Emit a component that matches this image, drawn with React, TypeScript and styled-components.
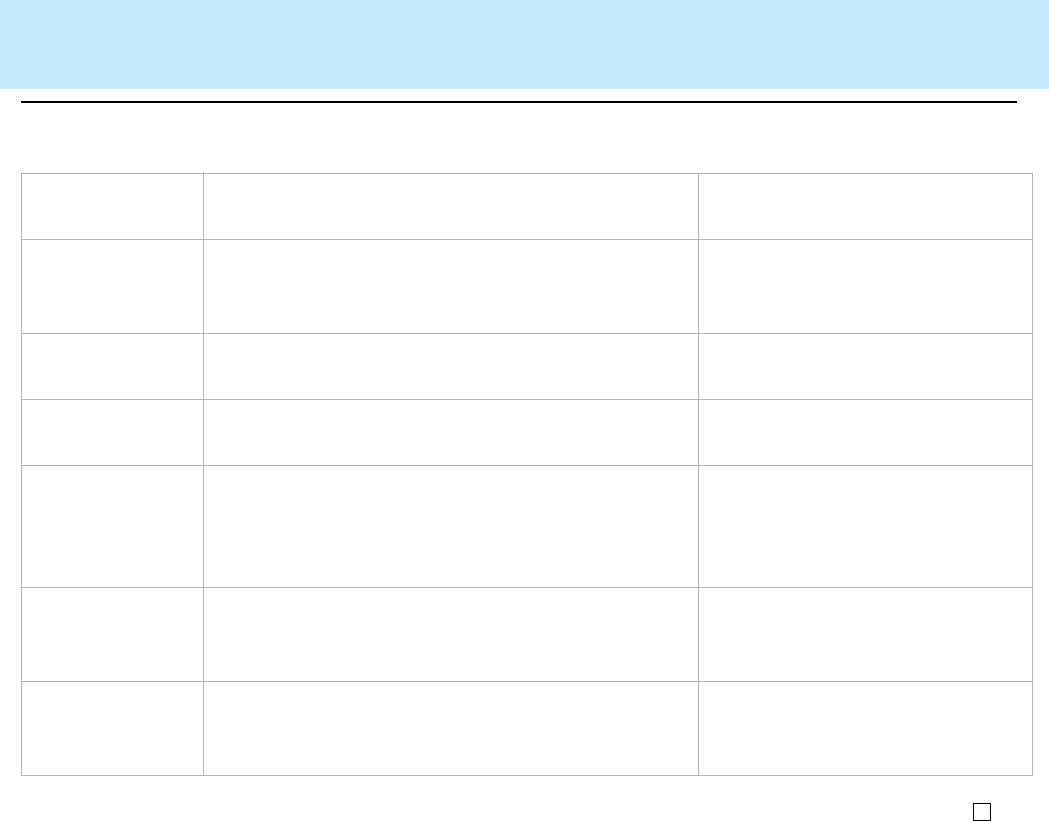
import React from 'react';
import styled, {createGlobalStyle} from 'styled-components';

const GlobalStyle = createGlobalStyle`
  html, body {
    margin: 0;
    padding: 0;
    background: white;
    font-family: "Liberation Sans", Arial, sans-serif;
  }
`;

const Page = styled.div`
  display: flex;
  flex-direction: column;
  width: 1049px;
`;

const Banner = styled.header`
  height: 89px;
  background: #c2ebff;
`;

const Rule = styled.hr`
  margin: 12px 0 0 21px;
  width: 996px;
  height: 2px;
  border: none;
  background: #000;
`;

const Grid = styled.div`
  margin: 70px 0 0 21px;
  width: 1012px;
  display: grid;
  grid-template-columns: 182px 495px 334px;
  border-top: 1px solid #b3b3b3;
  border-left: 1px solid #b3b3b3;
  box-sizing: border-box;
`;

const Cell = styled.div<{h: number}>`
  height: ${p => p.h}px;
  border-right: 1px solid #b3b3b3;
  border-bottom: 1px solid #b3b3b3;
  box-sizing: border-box;
`;

const Footer = styled.div`
  display: flex;
  justify-content: flex-end;
  padding: 27px 58px 0 0;
`;

const Box = styled.span`
  width: 18px;
  height: 18px;
  border: 1px solid #000;
  box-sizing: border-box;
`;

const rows = [66, 94, 66, 66, 122, 94, 94];

function App() {
  return (
    <Page>
      <GlobalStyle/>
      <Banner/>
      <Rule/>
      <Grid>
        {
          rows.map((h, i) => (
            <React.Fragment key={i}>
              <Cell h={h}/>
              <Cell h={h}/>
              <Cell h={h}/>
            </React.Fragment>
          ))
        }
      </Grid>
      <Footer>
        <Box/>
      </Footer>
    </Page>
  );
}

export default App;
